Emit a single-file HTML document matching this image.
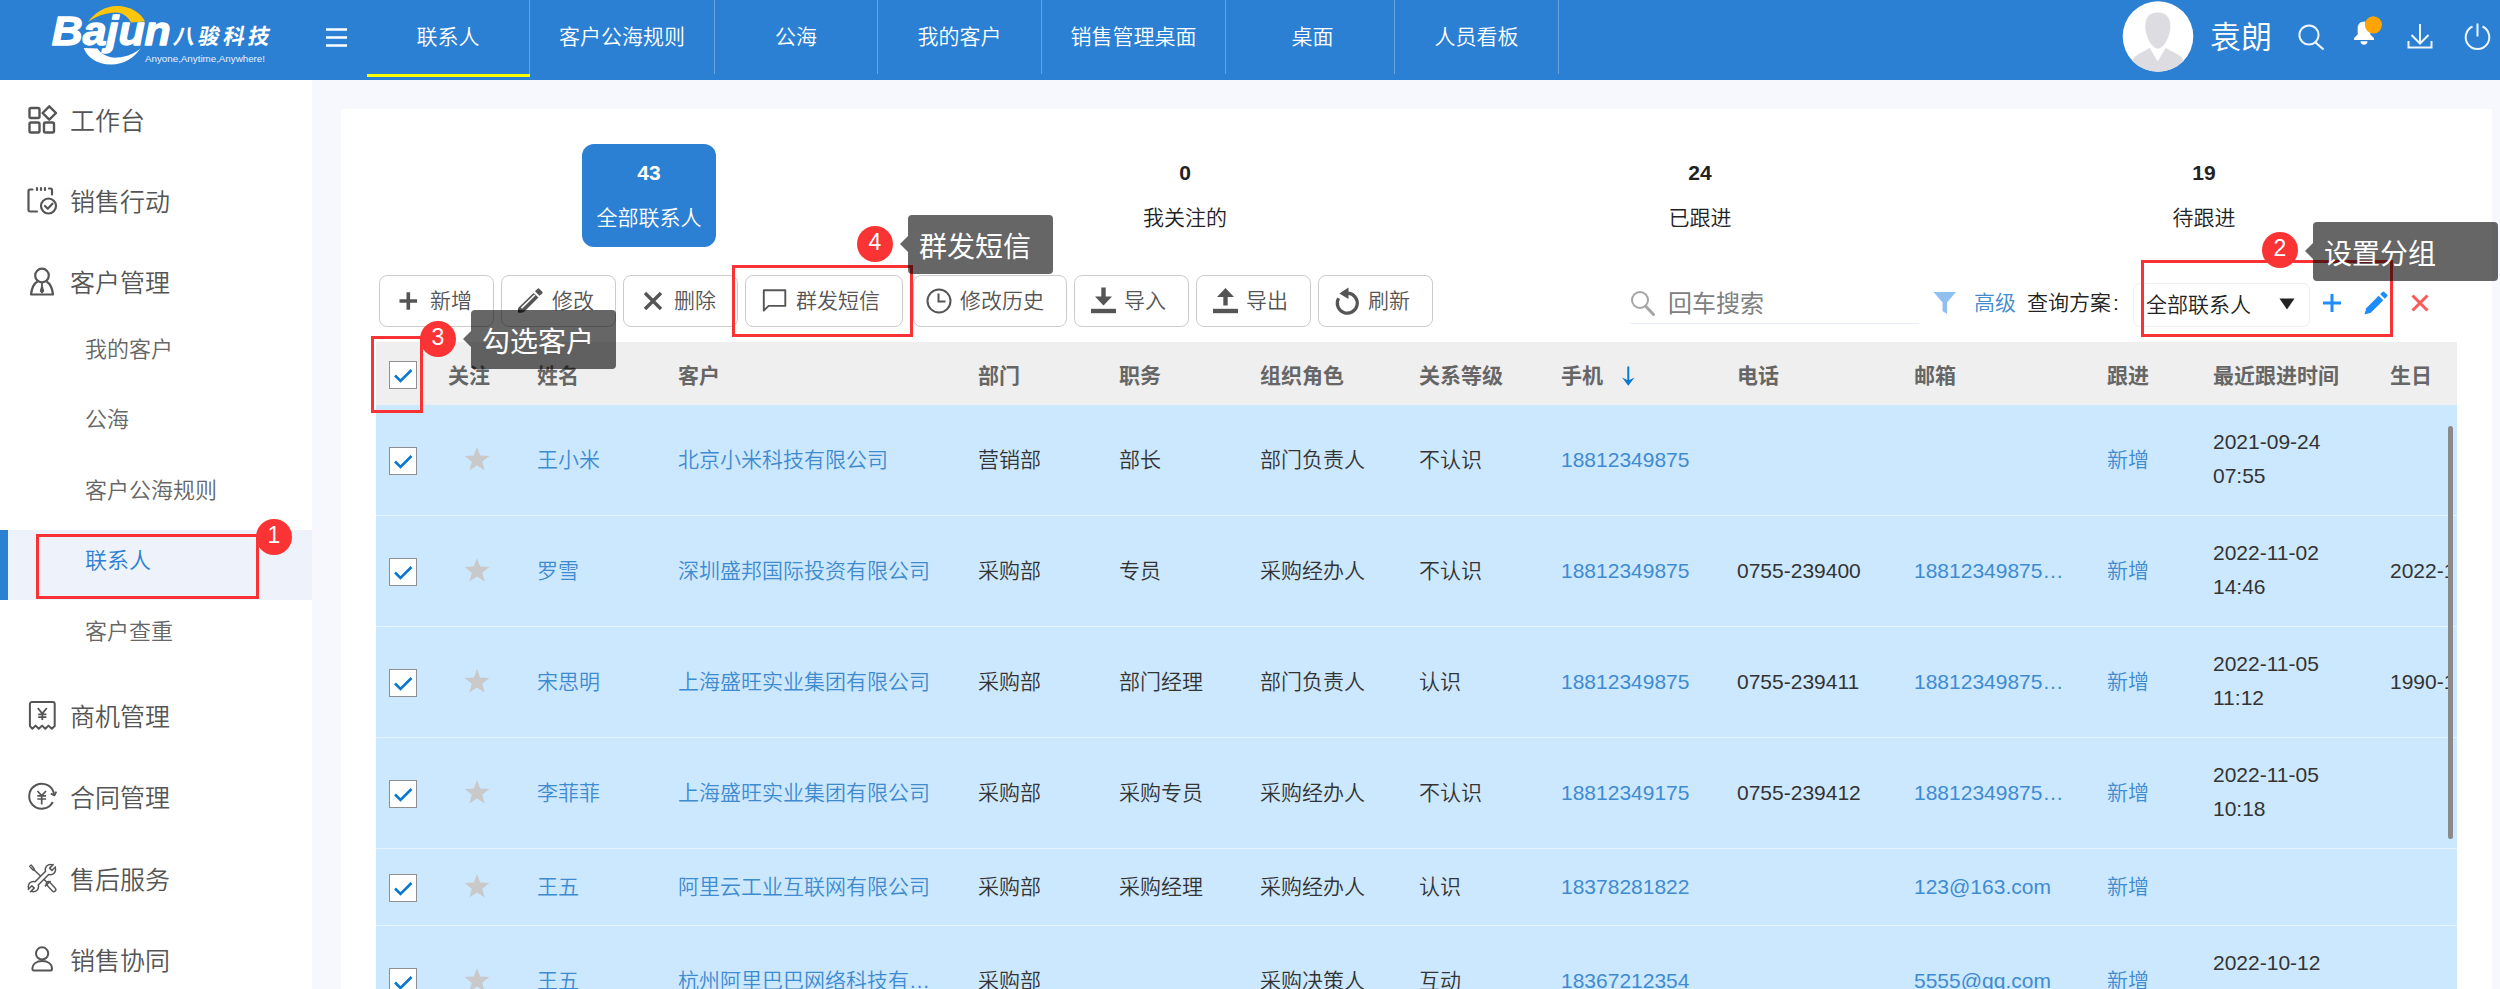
<!DOCTYPE html>
<html lang="zh-CN">
<head>
<meta charset="utf-8">
<title>联系人</title>
<style>
*{box-sizing:border-box;margin:0;padding:0}
html,body{width:2500px;height:989px;overflow:hidden;background:#f6f8fd}
body{position:relative;font-family:"Liberation Sans","Noto Sans CJK SC",sans-serif;color:#333;font-size:21px;font-weight:350}
.abs{position:absolute}
/* header */
#hd{position:absolute;left:0;top:0;width:2500px;height:80px;background:#2b80d3}
.tab{position:absolute;top:0;height:74px;line-height:74px;text-align:center;color:#fff;font-size:21px;border-right:1px solid rgba(255,255,255,.28)}
.tab.on{border-bottom:0}
#uline{position:absolute;left:367px;top:74px;width:163px;height:3px;background:#ffff00}
#uname{position:absolute;left:2210px;top:15px;font-size:31px;line-height:46px;color:#fff}
/* sidebar */
#sb{position:absolute;left:0;top:80px;width:312px;height:909px;background:#fff}
.m1{position:absolute;left:70px;font-size:25px;line-height:36px;color:#555;white-space:nowrap}
.m2{position:absolute;left:85px;font-size:22px;line-height:34px;color:#666;white-space:nowrap}
.mi{position:absolute;left:26px;width:32px;height:32px}
#act{position:absolute;left:0;top:450px;width:312px;height:70px;background:#eef3fb}
#actbar{position:absolute;left:0;top:450px;width:8px;height:70px;background:#2b80d3}
/* panel */
#pn{position:absolute;left:341px;top:109px;width:2151px;height:880px;background:#fff}
.stat{position:absolute;text-align:center;white-space:nowrap;color:#222}
.stat b{display:block;font-size:21px;line-height:30px;padding-top:1px}
.stat span{display:block;font-size:21px;line-height:32px}
#card{position:absolute;left:582px;top:144px;width:134px;height:103px;border-radius:12px;background:#2b80d3}
.btn{position:absolute;top:275px;height:52px;border:1px solid #ccc;border-radius:8px;background:#fff;color:#555;font-size:21px;line-height:50px;white-space:nowrap}
.btn span{position:absolute;top:0}
.btn svg{position:absolute}
/* annotations */
.rr{position:absolute;border:3px solid #f93236}
.bdg{position:absolute;width:36px;height:36px;border-radius:18px;background:#fa3335;color:#fff;font-size:23px;line-height:32.600px;text-align:center}
.tip{position:absolute;background:rgba(0,0,0,.6);color:#fff;font-size:28px;font-weight:400;border-radius:4px;white-space:nowrap;padding-left:11px;height:59px;line-height:65px}
.tip:before{content:"";position:absolute;left:-8px;top:21px;border-right:8px solid rgba(0,0,0,.6);border-top:8px solid transparent;border-bottom:8px solid transparent}
/* table */
#th{position:absolute;left:376px;top:342px;width:2081px;height:63px;background:#efefef;overflow:hidden}
#th span{position:absolute;top:0;line-height:67px;font-weight:bold;color:#666;white-space:nowrap}
#tb{position:absolute;left:376px;top:405px;width:2081px;height:584px;overflow:hidden;background:#cce8ff}
.row{position:absolute;left:0;width:2081px;height:111px;border-bottom:1px solid #e4f3fe}
.row span,.row a{position:absolute;top:0;height:109px;line-height:109px;white-space:nowrap;color:#333}
.row a{color:#3f8bd0;text-decoration:none}
.row .d2{line-height:34px;top:20px;height:auto}

.cb{position:absolute;left:13px;margin-top:1px;width:28px;height:28px;background:#fff;border:1px solid #8f8f8f}
.cb svg{position:absolute;left:0;top:0}
.star{position:absolute;left:88px;margin-top:1px;width:26px;height:26px}
.c3{left:161px}.c4{left:302px}.c5{left:602px}.c6{left:743px}.c7{left:884px}.c8{left:1043px}.c9{left:1185px}.c10{left:1361px}.c11{left:1538px}.c12{left:1731px}.c13{left:1837px}.c14{left:2014px;width:58px;overflow:hidden}
</style>
</head>
<body>
<div id="hd">
<svg class="abs" style="left:40px;top:0" width="240" height="80" viewBox="40 0 240 80">
<path d="M88 22C95 12.500 105 6 117 6C130 6 141 12.500 145 21.500L131 22.500C128 17 123 12.500 116 12.500C106 12.500 97 16 88 22Z" fill="#fdc50b"/>
<path d="M83.700 48L97.600 48.500C101 54 108 58 117 57.600C127 57 135 53 140.500 48.500C134 58 124 64.500 111 64.500C97 64.500 87 57 83.700 48Z" fill="#fff"/>
<text x="51.800" y="45" font-family="'Liberation Sans',sans-serif" font-weight="bold" font-style="italic" font-size="40" fill="#fff" stroke="#fff" stroke-width="1.300" stroke-linejoin="round" textLength="119" lengthAdjust="spacingAndGlyphs">Bajun</text>
<text transform="translate(172.500 43.600) skewX(-11)" font-family="'Liberation Sans','Noto Sans CJK SC',sans-serif" font-weight="bold" font-size="21.500" fill="#fff" textLength="96" lengthAdjust="spacing">八骏科技</text>
<text x="145" y="61.500" font-family="'Liberation Sans',sans-serif" font-size="9.500" fill="#eaf2fc" textLength="120" lengthAdjust="spacingAndGlyphs">Anyone,Anytime,Anywhere!</text>
</svg>
<svg class="abs" style="left:324px;top:26px" width="24" height="22" viewBox="0 0 24 22"><path d="M2 3.5h21M2 11.5h21M2 19.5h21" stroke="#fff" stroke-width="2.4" fill="none"/></svg>
<div class="tab on" style="left:367px;width:163px">联系人</div>
<div class="tab" style="left:530px;width:185px">客户公海规则</div>
<div class="tab" style="left:715px;width:163px">公海</div>
<div class="tab" style="left:878px;width:164px">我的客户</div>
<div class="tab" style="left:1042px;width:184px">销售管理桌面</div>
<div class="tab" style="left:1226px;width:169px;padding-left:5px">桌面</div>
<div class="tab" style="left:1395px;width:164px">人员看板</div>
<div id="uline"></div>
<svg class="abs" style="left:2122px;top:0" width="72" height="74" viewBox="0 0 72 74">
<defs><clipPath id="av"><circle cx="36" cy="36.500" r="35.300"/></clipPath></defs>
<circle cx="36" cy="36.500" r="35.300" fill="#fff"/>
<g clip-path="url(#av)" fill="#dddde1">
<path d="M27.600 47.700L35.700 61.500L43.800 47.700C48 51 57 53.500 60.500 58.500C63 62 64 68 64 74H8C8 68 9 62 11.500 58.500C15 53.500 23.500 51 27.600 47.700Z"/>
<path d="M35.800 12C43.500 12 48.800 17 48.800 26C48.800 35 44 45 38.500 48.300C36.800 49.300 34.800 49.300 33.100 48.300C27.600 45 22.900 35 22.900 26C22.900 17 28 12 35.800 12Z" stroke="#fff" stroke-width="0.800"/>
</g>
</svg>
<div id="uname">袁朗</div>
<svg class="abs" style="left:2296px;top:22px" width="32" height="30" viewBox="0 0 32 30"><circle cx="13" cy="13" r="9.600" stroke="#f1f6fc" stroke-width="2" fill="none"/><path d="M19 20l8.500 7.500" stroke="#f1f6fc" stroke-width="2.200" fill="none"/></svg>
<svg class="abs" style="left:2350px;top:14px" width="36" height="36" viewBox="0 0 36 36"><path d="M14 7.500c3.500 0 6.300 2.800 6.300 6.300v6.700l3.600 3.600v1.900h-19.800v-1.900l3.600-3.600v-6.700c0-3.500 2.800-6.300 6.300-6.300z" fill="#fff"/><path d="M10.500 27.200h7a3.500 3.500 0 0 1-7 0z" fill="#fff"/><circle cx="23.400" cy="10.800" r="8.600" fill="#ffa400"/></svg>
<svg class="abs" style="left:2405px;top:22px" width="30" height="28" viewBox="0 0 30 28"><path d="M15 2v19M6.500 13l8.500 8.500l8.500-8.500M3.500 19v6.500h23v-6.500" stroke="#eef4fb" stroke-width="2" fill="none"/></svg>
<svg class="abs" style="left:2463px;top:22px" width="30" height="28" viewBox="0 0 30 28"><path d="M9.500 4.500a11.800 11.800 0 1 0 10 0" stroke="#eef4fb" stroke-width="2" fill="none"/><path d="M14.500 1.500v13" stroke="#eef4fb" stroke-width="2"/></svg>
</div>
<div id="sb">
<div id="act"></div><div id="actbar"></div>
<svg class="mi" style="top:25px;left:27px" viewBox="0 0 32 32" fill="none" stroke="#555" stroke-width="2.4" stroke-linejoin="round"><rect x="2.500" y="3" width="10" height="10" rx="1.500"/><rect x="2.500" y="17.500" width="10" height="10" rx="1.500"/><rect x="17" y="17.500" width="10" height="10" rx="1.500"/><path d="M22.300 1.300l6.700 6.700l-6.700 6.700l-6.700-6.700z"/></svg><div class="m1" style="top:23px">工作台</div>
<svg class="mi" style="top:105px" viewBox="0 0 32 32" fill="none" stroke="#555" stroke-width="2.200" stroke-linecap="round" stroke-linejoin="round"><path d="M11 26.500h-7a1.500 1.500 0 0 1-1.500-1.500v-19a1.500 1.500 0 0 1 1.500-1.500h2.500M23 3.500h1.500a1.500 1.500 0 0 1 1.500 1.500v4.500M11 3v2M15 3v2M19 3v2"/><circle cx="22.500" cy="21" r="7.500"/><path d="M19 21l2.700 2.700l4.800-5"/></svg><div class="m1" style="top:104px">销售行动</div>
<svg class="mi" style="top:186px" viewBox="0 0 32 32" fill="none" stroke="#555" stroke-width="2.200" stroke-linejoin="round"><circle cx="16" cy="9.500" r="6.800"/><path d="M11.500 15.500c-3.500 2-5.800 7-6.500 13h22c-0.700-6-3-11-6.500-13"/><path d="M16 17v3.500l-1.300 4.500l1.300 1.500l1.300-1.500l-1.300-4.500" stroke-width="1.800" fill="#555"/></svg><div class="m1" style="top:185px">客户管理</div>
<div class="m2" style="top:253px">我的客户</div>
<div class="m2" style="top:323px">公海</div>
<div class="m2" style="top:394px">客户公海规则</div>
<div class="m2" style="top:464px;color:#2b80d3">联系人</div>
<div class="m2" style="top:535px">客户查重</div>
<svg class="mi" style="top:620px" viewBox="0 0 32 32" fill="none" stroke="#555" stroke-width="2" stroke-linejoin="round" stroke-linecap="butt"><path d="M3.900 26V4.100a2 2 0 0 1 2-2H26.700a2 2 0 0 1 2 2V26L25.800 28.800L22.500 25.600L19.300 28.800L16.100 25.600L12.800 28.800L9.600 25.600L6.400 28.800Z"/><path d="M11.800 8l4.500 5.600l4.500-5.600M16.300 13.600v6.300M12.200 14.300h8.200M12.200 17.200h8.200" stroke-width="1.800"/></svg><div class="m1" style="top:619px">商机管理</div>
<svg class="mi" style="top:701px" viewBox="0 0 32 32" fill="none" stroke="#555" stroke-width="2" stroke-linejoin="round" stroke-linecap="butt"><path d="M26.800 21A12.500 12.500 0 1 1 28.100 13.600"/><path d="M24.800 12.700L28.500 14.300L30.300 10.700" stroke-width="1.800"/><path d="M11.400 10l4.300 4.600l4.300-4.600M15.700 14.600v8.800M11.300 14.800h8.800M11.300 18h8.800" stroke-width="1.700"/></svg><div class="m1" style="top:700px">合同管理</div>
<svg class="mi" style="top:783px" viewBox="0 0 32 32" fill="none"><path d="M6.400 5.200L20.900 19.300" stroke="#555" stroke-width="1.500"/><path d="M3.600 3.200L5.200 2L8.400 6L7.200 7.200Z" stroke="#555" stroke-width="1.300" fill="#fff" stroke-linejoin="round"/><path d="M22.300 20.700L27.800 26.600" stroke="#555" stroke-width="5.400" stroke-linecap="round"/><path d="M22.300 20.700L27.800 26.600" stroke="#fff" stroke-width="2.600" stroke-linecap="round"/><path d="M18.900 23.300L24.500 18" stroke="#555" stroke-width="1.600"/><path d="M7.400 23.600L24.400 6.600" stroke="#555" stroke-width="6" /><circle cx="24.400" cy="6.600" r="5.900" fill="#555"/><circle cx="7.400" cy="23.600" r="5.900" fill="#555"/><path d="M7.400 23.600L24.400 6.600" stroke="#fff" stroke-width="2.900"/><circle cx="24.400" cy="6.600" r="4.400" fill="#fff"/><circle cx="7.400" cy="23.600" r="4.400" fill="#fff"/><path d="M29.800 3.400L25.900 7.400L23.600 5.100L27.600 1.100" stroke="#555" stroke-width="1.500" fill="#fff" stroke-linejoin="round"/><path d="M4.200 29.100L8.200 25.100L5.900 22.800L1.900 26.800" stroke="#555" stroke-width="1.500" fill="#fff" stroke-linejoin="round"/></svg><div class="m1" style="top:782px">售后服务</div>
<svg class="mi" style="top:864px" viewBox="0 0 32 32" fill="none" stroke="#555" stroke-width="2" stroke-linejoin="round"><circle cx="16.100" cy="9.400" r="6.100"/><path d="M6.400 25C6.400 20 10.500 17.100 16.200 17.100C22 17.100 26 20 26 25C26 26.200 25 26.600 24 26.600H8.400C7.400 26.600 6.400 26.200 6.400 25Z"/></svg><div class="m1" style="top:863px">销售协同</div>
</div>
<div id="pn"></div>
<div id="card"></div>
<div class="stat" style="left:549px;top:157px;width:200px;color:#fff"><b>43</b><span style="margin-top:14px">全部联系人</span></div>
<div class="stat" style="left:1085px;top:157px;width:200px"><b>0</b><span style="margin-top:14px">我关注的</span></div>
<div class="stat" style="left:1600px;top:157px;width:200px"><b>24</b><span style="margin-top:14px">已跟进</span></div>
<div class="stat" style="left:2104px;top:157px;width:200px"><b>19</b><span style="margin-top:14px">待跟进</span></div>
<div class="btn" style="left:379px;width:115px"><svg style="left:18px;top:15px" width="20" height="20" viewBox="0 0 20 20"><path d="M10.300 1.200v17.600M1.500 10h17.600" stroke="#555" stroke-width="3.600" fill="none"/></svg><span style="left:50px">新增</span></div>
<div class="btn" style="left:501px;width:115px"><svg style="left:15px;top:11px" width="28" height="28" viewBox="0 0 28 28"><path d="M16.600 6.100L21.400 10.600L7.200 24.800L6 25.600H1.100V21Z" fill="#555"/><path d="M17.300 7.400L18.400 8.500L5 21.700L3.900 20.600Z" fill="#fff"/><path d="M1.100 21.800L4.900 25.600H1.100Z" fill="#333"/><path d="M18 4.300L20.600 1.700Q21.400 0.900 22.200 1.700L25.300 4.800Q26.100 5.600 25.300 6.400L22.400 8.800Z" fill="#555"/></svg><span style="left:50px">修改</span></div>
<div class="btn" style="left:623px;width:115px"><svg style="left:19px;top:15px" width="20" height="20" viewBox="0 0 20 20"><path d="M2 2l16 16M18 2l-16 16" stroke="#555" stroke-width="3.400" fill="none"/></svg><span style="left:50px">删除</span></div>
<div class="btn" style="left:745px;width:158px"><svg style="left:16px;top:13px" width="28" height="26" viewBox="0 0 28 26"><path d="M1.800 1.300H23.300V16.900H6.600L1.800 21.600Z" stroke="#555" stroke-width="1.900" fill="none" stroke-linejoin="round"/></svg><span style="left:50px">群发短信</span></div>
<div class="btn" style="left:913px;width:154px"><svg style="left:11px;top:11px" width="28" height="28" viewBox="0 0 28 28"><circle cx="14" cy="14" r="11.500" stroke="#555" stroke-width="2" fill="none"/><path d="M13.500 6.500v8h7" stroke="#555" stroke-width="2" fill="none"/></svg><span style="left:46px">修改历史</span></div>
<div class="btn" style="left:1074px;width:115px"><svg style="left:15px;top:11px" width="28" height="28" viewBox="0 0 28 28"><path d="M13.500 0.500v12" stroke="#555" stroke-width="4.400"/><path d="M5 9.500h17l-8.500 9z" fill="#555"/><path d="M1 24h25" stroke="#555" stroke-width="4.400"/></svg><span style="left:49px">导入</span></div>
<div class="btn" style="left:1196px;width:115px"><svg style="left:15px;top:11px" width="28" height="28" viewBox="0 0 28 28"><path d="M13.500 18.500v-10" stroke="#555" stroke-width="4.400"/><path d="M5 10h17l-8.500-9z" fill="#555"/><path d="M1 24h25" stroke="#555" stroke-width="4.400"/></svg><span style="left:49px">导出</span></div>
<div class="btn" style="left:1318px;width:115px"><svg style="left:14px;top:11px" width="30" height="30" viewBox="0 0 30 30"><path d="M15 6.200A10 10 0 1 1 5.600 11.200" stroke="#555" stroke-width="3.200" fill="none"/><path d="M6.300 6.500l9.200-6v11.500z" fill="#555"/></svg><span style="left:49px">刷新</span></div>
<svg class="abs" style="left:1629px;top:289px" width="28" height="28" viewBox="0 0 28 28"><circle cx="11" cy="11" r="8" stroke="#a5a5a5" stroke-width="2" fill="none"/><path d="M16.500 17l8 8.500" stroke="#a5a5a5" stroke-width="3" stroke-linecap="round"/></svg>
<div class="abs" style="left:1668px;top:285px;font-size:24px;line-height:38px;color:#808080;font-weight:400">回车搜索</div>
<div class="abs" style="left:1630px;top:323px;width:289px;height:1px;background:#e9edf4"></div>
<svg class="abs" style="left:1932px;top:290px" width="26" height="26" viewBox="0 0 26 26"><path d="M1.500 2h22.500l-9 10.500v11.500l-4.500-3v-8.500z" fill="#90bff0"/></svg>
<div class="abs" style="left:1974px;top:287px;line-height:32px;color:#3f8bd0">高级</div>
<div class="abs" style="left:2027px;top:287px;line-height:32px;color:#222">查询方案<span style="margin-left:2px">:</span></div>
<div class="abs" style="left:2133px;top:283px;width:177px;height:44px;border:1px solid #eee;border-radius:7px;line-height:42px;padding-left:12px;color:#222">全部联系人</div>
<svg class="abs" style="left:2279px;top:298px" width="16" height="12" viewBox="0 0 16 12"><path d="M0.500 0.500h15l-7.500 11z" fill="#222"/></svg>
<svg class="abs" style="left:2322px;top:293px" width="20" height="20" viewBox="0 0 20 20"><path d="M10 1v18M1 10h18" stroke="#1e8cfa" stroke-width="3" fill="none"/></svg>
<svg class="abs" style="left:2362px;top:289px" width="28" height="28" viewBox="0 0 28 28"><path d="M2.500 25.500l1.700-6.300l12.500-12.500l4.600 4.600l-12.500 12.500z" fill="#1e8cfa"/><path d="M18.200 5.200l2.200-2.200a1.400 1.400 0 0 1 2 0l2.600 2.600a1.400 1.400 0 0 1 0 2l-2.200 2.200z" fill="#1e8cfa"/></svg>
<svg class="abs" style="left:2411px;top:294px" width="18" height="18" viewBox="0 0 18 18"><path d="M1.500 1.500l15 15M16.500 1.500l-15 15" stroke="#f95a5a" stroke-width="3" fill="none"/></svg>
<div id="th"><div class="cb" style="top:18px"><svg width="26" height="26" viewBox="0 0 26 26"><path d="M5 13.500l5.500 5.500l11-11" stroke="#0a78d2" stroke-width="2.600" fill="none"/></svg></div><span style="left:72px">关注</span><span style="left:161px">姓名</span><span style="left:302px">客户</span><span style="left:602px">部门</span><span style="left:743px">职务</span><span style="left:884px">组织角色</span><span style="left:1043px">关系等级</span><span style="left:1185px">手机</span><span style="left:1361px">电话</span><span style="left:1538px">邮箱</span><span style="left:1731px">跟进</span><span style="left:1837px">最近跟进时间</span><span style="left:2014px">生日</span><svg class="abs" style="left:1244px;top:23px" width="16" height="22" viewBox="0 0 16 22"><path d="M8.300 1.500v15" stroke="#0a7ad0" stroke-width="2" fill="none"/><path d="M2 12.500L8.300 20.800L14.600 12.500L8.300 15.500Z" fill="#0a7ad0"/></svg></div>
<div id="tb">
<div class="row" style="top:0px;height:111px"><div class="cb" style="top:41px"><svg width="26" height="26" viewBox="0 0 26 26"><path d="M5 13.500l5.500 5.500l11-11" stroke="#0a78d2" stroke-width="2.600" fill="none"/></svg></div><svg class="star" style="top:40px" viewBox="0 0 26 26"><path d="M13 1l3.200 8.600l9.200 0.400l-7.200 5.700l2.500 8.900l-7.700-5.100l-7.700 5.100l2.500-8.900l-7.200-5.700l9.200-0.400z" fill="#c9c9c9"/></svg><a class="c3" >王小米</a><a class="c4" >北京小米科技有限公司</a><span class="c5" >营销部</span><span class="c6" >部长</span><span class="c7" >部门负责人</span><span class="c8" >不认识</span><a class="c9" >18812349875</a><a class="c12" >新增</a><span class="c13 d2">2021-09-24<br>07:55</span></div>
<div class="row" style="top:111px;height:111px"><div class="cb" style="top:41px"><svg width="26" height="26" viewBox="0 0 26 26"><path d="M5 13.500l5.500 5.500l11-11" stroke="#0a78d2" stroke-width="2.600" fill="none"/></svg></div><svg class="star" style="top:40px" viewBox="0 0 26 26"><path d="M13 1l3.200 8.600l9.200 0.400l-7.200 5.700l2.500 8.900l-7.700-5.100l-7.700 5.100l2.500-8.900l-7.200-5.700l9.200-0.400z" fill="#c9c9c9"/></svg><a class="c3" >罗雪</a><a class="c4" >深圳盛邦国际投资有限公司</a><span class="c5" >采购部</span><span class="c6" >专员</span><span class="c7" >采购经办人</span><span class="c8" >不认识</span><a class="c9" >18812349875</a><span class="c10" >0755-239400</span><a class="c11" >18812349875…</a><a class="c12" >新增</a><span class="c13 d2">2022-11-02<br>14:46</span><span class="c14" >2022-11-02</span></div>
<div class="row" style="top:222px;height:111px"><div class="cb" style="top:41px"><svg width="26" height="26" viewBox="0 0 26 26"><path d="M5 13.500l5.500 5.500l11-11" stroke="#0a78d2" stroke-width="2.600" fill="none"/></svg></div><svg class="star" style="top:40px" viewBox="0 0 26 26"><path d="M13 1l3.200 8.600l9.200 0.400l-7.200 5.700l2.500 8.900l-7.700-5.100l-7.700 5.100l2.500-8.900l-7.200-5.700l9.200-0.400z" fill="#c9c9c9"/></svg><a class="c3" >宋思明</a><a class="c4" >上海盛旺实业集团有限公司</a><span class="c5" >采购部</span><span class="c6" >部门经理</span><span class="c7" >部门负责人</span><span class="c8" >认识</span><a class="c9" >18812349875</a><span class="c10" >0755-239411</span><a class="c11" >18812349875…</a><a class="c12" >新增</a><span class="c13 d2">2022-11-05<br>11:12</span><span class="c14" >1990-11-05</span></div>
<div class="row" style="top:333px;height:111px"><div class="cb" style="top:41px"><svg width="26" height="26" viewBox="0 0 26 26"><path d="M5 13.500l5.500 5.500l11-11" stroke="#0a78d2" stroke-width="2.600" fill="none"/></svg></div><svg class="star" style="top:40px" viewBox="0 0 26 26"><path d="M13 1l3.200 8.600l9.200 0.400l-7.200 5.700l2.500 8.900l-7.700-5.100l-7.700 5.100l2.500-8.900l-7.200-5.700l9.200-0.400z" fill="#c9c9c9"/></svg><a class="c3" >李菲菲</a><a class="c4" >上海盛旺实业集团有限公司</a><span class="c5" >采购部</span><span class="c6" >采购专员</span><span class="c7" >采购经办人</span><span class="c8" >不认识</span><a class="c9" >18812349175</a><span class="c10" >0755-239412</span><a class="c11" >18812349875…</a><a class="c12" >新增</a><span class="c13 d2">2022-11-05<br>10:18</span></div>
<div class="row" style="top:444px;height:77px"><div class="cb" style="top:24px"><svg width="26" height="26" viewBox="0 0 26 26"><path d="M5 13.500l5.500 5.500l11-11" stroke="#0a78d2" stroke-width="2.600" fill="none"/></svg></div><svg class="star" style="top:23px" viewBox="0 0 26 26"><path d="M13 1l3.200 8.600l9.200 0.400l-7.200 5.700l2.500 8.900l-7.700-5.100l-7.700 5.100l2.500-8.900l-7.200-5.700l9.200-0.400z" fill="#c9c9c9"/></svg><a class="c3" style="height:75px;line-height:75px">王五</a><a class="c4" style="height:75px;line-height:75px">阿里云工业互联网有限公司</a><span class="c5" style="height:75px;line-height:75px">采购部</span><span class="c6" style="height:75px;line-height:75px">采购经理</span><span class="c7" style="height:75px;line-height:75px">采购经办人</span><span class="c8" style="height:75px;line-height:75px">认识</span><a class="c9" style="height:75px;line-height:75px">18378281822</a><a class="c11" style="height:75px;line-height:75px">123@163.com</a><a class="c12" style="height:75px;line-height:75px">新增</a></div>
<div class="row" style="top:521px;height:111px"><div class="cb" style="top:41px"><svg width="26" height="26" viewBox="0 0 26 26"><path d="M5 13.500l5.500 5.500l11-11" stroke="#0a78d2" stroke-width="2.600" fill="none"/></svg></div><svg class="star" style="top:40px" viewBox="0 0 26 26"><path d="M13 1l3.200 8.600l9.200 0.400l-7.200 5.700l2.500 8.900l-7.700-5.100l-7.700 5.100l2.500-8.900l-7.200-5.700l9.200-0.400z" fill="#c9c9c9"/></svg><a class="c3" >王五</a><a class="c4" >杭州阿里巴巴网络科技有…</a><span class="c5" >采购部</span><span class="c7" >采购决策人</span><span class="c8" >互动</span><a class="c9" >18367212354</a><a class="c11" >5555@qq.com</a><a class="c12" >新增</a><span class="c13 d2">2022-10-12<br>09:30</span></div>
<div class="abs" style="left:2072px;top:21px;width:5px;height:413px;border-radius:3px;background:#8a8a8a"></div>
</div>
<div class="rr" style="left:36px;top:534px;width:223px;height:65px"></div>
<div class="bdg" style="left:256px;top:519px">1</div>
<div class="rr" style="left:2141px;top:260px;width:252px;height:77px"></div>
<div class="tip" style="left:2313px;top:222px;width:185px;height:59px;line-height:66px">设置分组</div>
<div class="bdg" style="left:2262px;top:232px">2</div>
<div class="rr" style="left:371px;top:336px;width:52px;height:77px"></div>
<div class="tip" style="left:471px;top:310px;width:145px">勾选客户</div>
<div class="bdg" style="left:420px;top:321px">3</div>
<div class="rr" style="left:732px;top:265px;width:181px;height:72px"></div>
<div class="tip" style="left:908px;top:215px;width:145px">群发短信</div>
<div class="bdg" style="left:857px;top:226px">4</div>
</body>
</html>
